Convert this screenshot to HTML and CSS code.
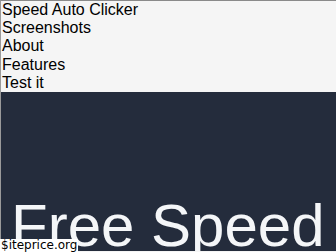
FILE: index.html
```html
<!DOCTYPE html>
<html>
<head>
<meta charset="utf-8">
<link rel="stylesheet" href="styles.css">
</head>
<body>
<div class="frame">
  <nav class="nav">
    <a class="nav-item">Speed Auto Clicker</a>
    <a class="nav-item">Screenshots</a>
    <a class="nav-item">About</a>
    <a class="nav-item">Features</a>
    <a class="nav-item">Test it</a>
  </nav>
  <section class="hero">
    <h1 class="hero-title">Free Speed Auto Clicker</h1>
  </section>
</div>
<div class="badge">$iteprice.org</div>
</body>
</html>
```
FILE: styles.css
```css
html, body {
  margin: 0;
  padding: 0;
  height: 252px;
  overflow: hidden;
  background: #f5f5f5;
}
.frame {
  border-top: 1px solid #8a8a8a;
  border-left: 1px solid #9a9a9a;
  height: 251px;
  overflow: hidden;
  box-sizing: border-box;
}
.nav {
  display: flex;
  flex-direction: column;
  padding-left: 1px;
  font-family: "Liberation Sans", Arial, sans-serif;
  font-size: 16px;
  line-height: 18.2px;
  color: #000;
  background: #f5f5f5;
}
.nav-item {
  display: block;
}
.hero {
  background: #242c3c;
  padding: 99px 0 0 10px;
  height: 200px;
}
.hero-title {
  margin: 0;
  font-family: "Liberation Sans", Arial, sans-serif;
  font-weight: normal;
  font-size: 60px;
  line-height: normal;
  color: #f4f6f8;
}
.badge {
  position: absolute;
  left: 0;
  bottom: 0;
  padding: 0 1px;
  background: #fff;
  font-family: "DejaVu Sans", sans-serif;
  font-size: 12px;
  line-height: 13px;
  color: #000;
}
```
